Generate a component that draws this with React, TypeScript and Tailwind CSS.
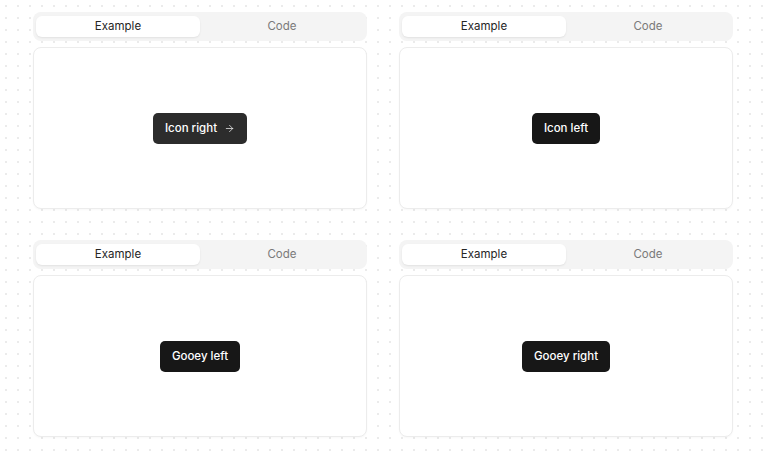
import React from 'react';
import { ArrowRight } from 'lucide-react';

const demos = [
  { label: 'Icon right', icon: true, tone: 'bg-[#2c2c2c]' },
  { label: 'Icon left', icon: false, tone: 'bg-[#171717]' },
  { label: 'Gooey left', icon: false, tone: 'bg-[#171717]' },
  { label: 'Gooey right', icon: false, tone: 'bg-[#171717]' },
];

function Preview({ label, icon, tone }: { label: string; icon: boolean; tone: string }) {
  return (
    <div className="flex flex-col gap-[6px]">
      {/* Tabs */}
      <div className="grid grid-cols-2 h-[29px] rounded-lg bg-[#f4f4f4] px-[3px] py-[4px]">
        <div className="flex items-center justify-center rounded-md bg-white pt-[1px] text-[11.5px] text-[#262626] shadow-[0_1px_2px_rgba(0,0,0,0.08)]">
          Example
        </div>
        <div className="flex items-center justify-center pt-[1px] text-[11.5px] text-[#7a7a7a]">Code</div>
      </div>

      {/* Canvas */}
      <div className="flex h-[162px] items-center justify-center rounded-lg border border-[#ececec] bg-white shadow-[0_1px_2px_rgba(0,0,0,0.03)]">
        <button
          className={`flex h-[31px] items-center gap-[7px] rounded-[5px] px-[11.5px] pt-[1px] text-[11.5px] font-medium text-white ${tone}`}
        >
          <span>{label}</span>
          {icon && <ArrowRight size={11} strokeWidth={1.5} />}
        </button>
      </div>
    </div>
  );
}

export default function App() {
  return (
    <div
      className="h-[452px] w-[768px] overflow-hidden bg-white bg-[radial-gradient(#ebebeb_1px,transparent_1px)] bg-[size:12px_12px] pl-[33px] pr-[35px] pt-[12px]"
      style={{ fontFamily: 'Inter, "Noto Sans", sans-serif' }}
    >
      <div className="grid grid-cols-2 gap-x-[32px] gap-y-[31px]">
        {demos.map((d) => (
          <Preview key={d.label} {...d} />
        ))}
      </div>
    </div>
  );
}
